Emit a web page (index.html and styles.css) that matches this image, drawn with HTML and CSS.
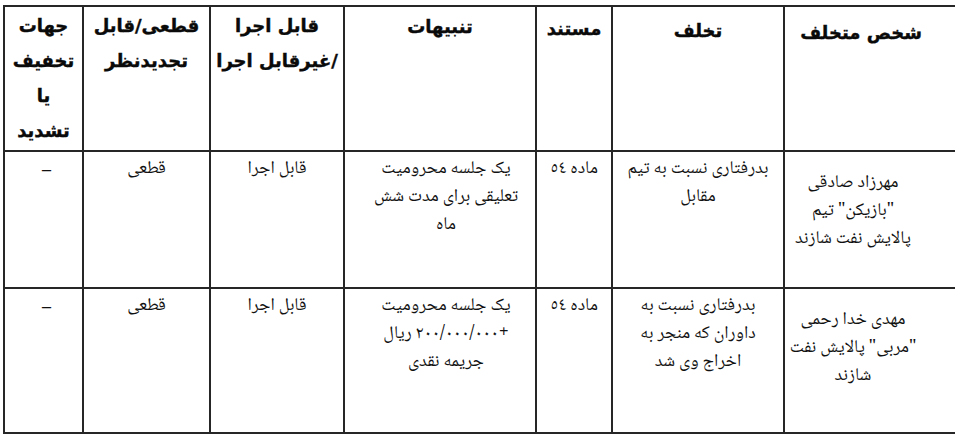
FILE: index.html
```html
<!DOCTYPE html>
<html lang="fa">
<head>
<meta charset="utf-8">
<title>آراء کمیته انضباطی</title>
<link rel="stylesheet" href="styles.css">
</head>
<body>
<div class="sheet">
<table class="grid" dir="rtl">
<colgroup>
<col class="w-name"><col class="w-offence"><col class="w-ref"><col class="w-penalty"><col class="w-exec"><col class="w-final"><col class="w-adj">
</colgroup>
<thead>
<tr class="head-row">
<th class="h-name">شخص متخلف</th>
<th class="h-offence">تخلف</th>
<th class="h-ref">مستند</th>
<th class="h-penalty">تنبیهات</th>
<th class="h-exec">قابل اجرا<br>/غیرقابل اجرا</th>
<th class="h-final">قطعی/قابل<br>تجدیدنظر</th>
<th class="h-adj">جهات<br>تخفیف<br>یا<br>تشدید</th>
</tr>
</thead>
<tbody>
<tr class="row-1">
<td class="name">مهرزاد صادقی<br>"بازیکن" تیم<br>پالایش نفت شازند</td>
<td>بدرفتاری نسبت به تیم<br>مقابل</td>
<td>ماده ٥٤</td>
<td class="penalty">یک جلسه محرومیت<br>تعلیقی برای مدت شش<br>ماه</td>
<td>قابل اجرا</td>
<td>قطعی</td>
<td class="dash">–</td>
</tr>
<tr class="row-2">
<td class="name">مهدی خدا رحمی<br>"مربی" پالایش نفت<br>شازند</td>
<td>بدرفتاری نسبت به<br>داوران که منجر به<br>اخراج وی شد</td>
<td>ماده ٥٤</td>
<td class="penalty">یک جلسه محرومیت<br>+۲۰۰/۰۰۰/۰۰۰ ریال<br>جریمه نقدی</td>
<td>قابل اجرا</td>
<td>قطعی</td>
<td class="dash">–</td>
</tr>
</tbody>
</table>
</div>
</body>
</html>
```

FILE: styles.css
```css
html, body {
  margin: 0;
  padding: 0;
  background: #ffffff;
  overflow: hidden;
}

body {
  width: 955px;
  height: 438px;
  color: #111111;
  font-family: "Noto Naskh Arabic", "DejaVu Sans", sans-serif;
}

.sheet {
  padding: 5px 0 0 3px;
}

.grid {
  border-collapse: collapse;
  table-layout: fixed;
  width: 954px;
}

.w-name { width: 174px; }
.w-offence { width: 172px; }
.w-ref { width: 76px; }
.w-penalty { width: 192px; }
.w-exec { width: 134px; }
.w-final { width: 127px; }
.w-adj { width: 79px; }

.grid th,
.grid td {
  border: 2px solid #262626;
  vertical-align: top;
  text-align: center;
  padding: 0;
}

.head-row { height: 145px; }
.row-1 { height: 137px; }
.row-2 { height: 145px; }

.grid th {
  font-family: "DejaVu Sans", sans-serif;
  font-weight: bold;
  font-size: 18px;
  line-height: 35px;
  color: #0a0a0a;
  -webkit-text-stroke: 0.4px #0a0a0a;
}

.grid th.h-adj { padding-top: 1px; }
.grid th.h-final { padding-top: 1px; }
.grid th.h-exec { padding-top: 1px; }
.grid th.h-penalty { padding-top: 2px; }
.grid th.h-ref { padding-top: 4px; }
.grid th.h-offence { padding-top: 6px; }
.grid th.h-name { padding-top: 8px; padding-right: 20px; }

.grid td {
  font-size: 18px;
  line-height: 28px;
  padding-top: 3px;
}

.grid td.name {
  padding-top: 17px;
  padding-right: 36px;
}

.grid td.penalty {
  padding-left: 12px;
}

.grid td.dash {
  padding-top: 6px;
  padding-left: 6px;
}
```
